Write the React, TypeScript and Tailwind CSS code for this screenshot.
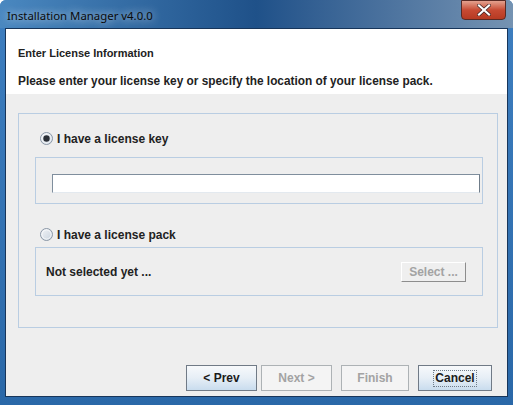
import React from 'react'

const Radio = ({ checked }: { checked?: boolean }) => (
  <svg width="13" height="13" viewBox="0 0 13 13" className="shrink-0">
    <defs>
      <linearGradient id={checked ? 'rg1' : 'rg2'} x1="0" y1="0" x2="1" y2="1">
        <stop offset="0" stopColor="#f2f4f7" />
        <stop offset="1" stopColor="#c9d3de" />
      </linearGradient>
    </defs>
    <circle cx="6.5" cy="6.5" r="6" fill={`url(#${checked ? 'rg1' : 'rg2'})`} stroke="#8a97a6" />
    <circle cx="6.5" cy="6.5" r="4.6" fill="none" stroke="#ffffff" strokeOpacity="0.7" />
    {checked && <circle cx="6.5" cy="6.5" r="3.2" fill="#2b2f36" />}
  </svg>
)

const btnOn =
  'h-[26px] flex items-center justify-center border border-[#707a86] bg-gradient-to-b from-[#f7f9fb] via-[#e6eef6] to-[#c9dcee] text-[12px] font-bold text-[#1b1b1b]'
const btnOff =
  'h-[26px] flex items-center justify-center border border-[#adb2b5] bg-[#f4f4f4] text-[12px] font-bold text-[#a3a3a3]'

export default function App() {
  return (
    <div
      className="w-[513px] h-[405px] flex flex-col bg-gradient-to-b from-[#3e7fc0] to-[#2a68a8] rounded-t-[6px] overflow-hidden"
      style={{ fontFamily: '"Liberation Sans", Arial, sans-serif' }}
    >
      <div className="h-[28px] flex items-start justify-between bg-gradient-to-r from-[#4a88c0] via-[#1f5189] to-[#7593b2]">
        <div
          className="pl-[7px] pt-[7px] text-[11.4px] text-[#0b0b0b] [text-shadow:0_0_8px_rgba(255,255,255,0.9)]"
          style={{ fontFamily: '"Noto Sans", "Liberation Sans", sans-serif' }}
        >
          Installation Manager v4.0.0
        </div>
        <div className="mr-[7px] w-[45px] h-[20px] flex items-center justify-center rounded-b-[4px] border border-[#5a2a24] bg-gradient-to-b from-[#e3a18f] via-[#c74a33] to-[#b63a22]">
          <svg width="14" height="12" viewBox="0 0 14 12">
            <path d="M2 1.5 L12 10.5 M12 1.5 L2 10.5" stroke="#3a2020" strokeWidth="3.6" strokeLinecap="square" />
            <path d="M2 1.5 L12 10.5 M12 1.5 L2 10.5" stroke="#ffffff" strokeWidth="2.2" strokeLinecap="square" />
          </svg>
        </div>
      </div>

      <div className="mx-[5px] h-[369px] border border-[#17355a] flex flex-col bg-[#eeeeee]">
        <div className="h-[65px] bg-white pl-[12px] flex flex-col">
          <div className="mt-[16px] text-[11px] font-bold text-[#222]">Enter License Information</div>
          <div className="mt-[11px] text-[11.85px] font-bold text-[#222]">
            Please enter your license key or specify the location of your license pack.
          </div>
        </div>

        <div className="ml-[12px] mt-[19px] w-[480px] h-[215px] border border-[#b9cde2] flex flex-col">
          <div className="mt-[18px] ml-[21px] flex items-center gap-[4px] h-[13px]">
            <Radio checked />
            <span className="text-[12px] font-bold text-[#222]">I have a license key</span>
          </div>
          <div className="ml-[16px] mt-[12px] w-[448px] h-[47px] border border-[#b9cde2] pt-[16px] pl-[16px]">
            <div className="w-[428px] h-[19px] bg-white border border-[#7f8e9d] border-b-[#e3e9ef] border-r-[#6f7c89]" />
          </div>
          <div className="mt-[24px] ml-[21px] flex items-center gap-[4px] h-[13px]">
            <Radio />
            <span className="text-[12px] font-bold text-[#222]">I have a license pack</span>
          </div>
          <div className="ml-[16px] mt-[6px] w-[448px] h-[49px] border border-[#b9cde2] flex items-center justify-between pl-[10px] pr-[16px]">
            <span className="text-[12px] font-bold text-[#222]">Not selected yet ...</span>
            <div className="w-[65px] h-[20px] flex items-center justify-center border border-white border-b-[#8d8d8d] border-r-[#8d8d8d] bg-[#efefef] text-[12px] font-bold text-[#a3a3a3]">
              Select ...
            </div>
          </div>
        </div>

        <div className="mt-[37px] flex justify-end pr-[15px]">
          <div className={btnOn + ' w-[71px]'}>&lt; Prev</div>
          <div className={btnOff + ' w-[71px] ml-[4px]'}>Next &gt;</div>
          <div className={btnOff + ' w-[68px] ml-[9px]'}>Finish</div>
          <div className={btnOn + ' w-[74px] ml-[9px]'}>
            <span className="border border-dotted border-[#6f7c8a] px-[1px] leading-[15px]">Cancel</span>
          </div>
        </div>
      </div>
    </div>
  )
}
